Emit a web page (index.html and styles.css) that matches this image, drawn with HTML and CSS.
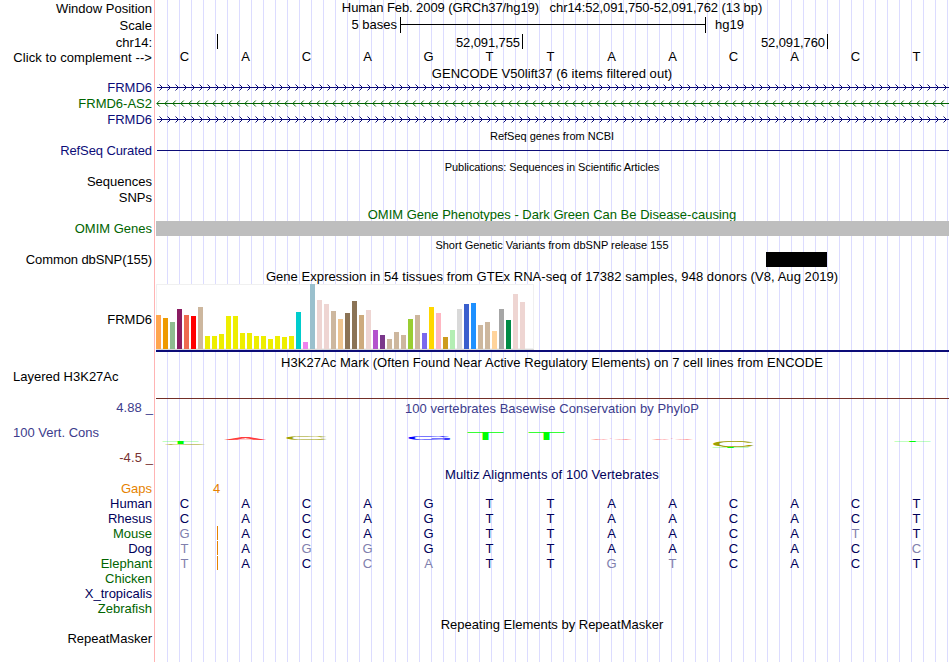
FILE: index.html
```html
<!DOCTYPE html>
<html lang="en">
<head>
    <meta charset="UTF-8">
    <meta name="viewport" content="width=device-width, initial-scale=1.0">
    <title>chr14:52,091,750-52,091,762 hg19</title>
    <link rel="stylesheet" href="styles.css">
</head>
<body>

    <div class="browser">
        <div class="labels">
            <div class="label h17">Window Position</div>
            <div class="label h17">Scale</div>
            <div class="label h15">chr14:</div>
            <div class="label h30 wide">Click to complement --&gt;</div>
            <div class="label h16 navy">FRMD6</div>
            <div class="label h16 green">FRMD6-AS2</div>
            <div class="label h31 navy">FRMD6</div>
            <div class="label h31 navy tight">RefSeq Curated</div>
            <div class="label h16">Sequences</div>
            <div class="label h31">SNPs</div>
            <div class="label h31 green">OMIM Genes</div>
            <div class="label h60 tight">Common dbSNP(155)</div>
            <div class="label h57">FRMD6</div>
            <div class="label h31 left">Layered H3K27Ac</div>
            <div class="label h25 cons limit">4.88 _</div>
            <div class="label h25 cons left">100 Vert. Cons</div>
            <div class="label h31 cons-min limit">-4.5 _</div>
            <div class="label h15 orange">Gaps</div>
            <div class="label h15 dark">Human</div>
            <div class="label h15 dark">Rhesus</div>
            <div class="label h15 green">Mouse</div>
            <div class="label h15 dark">Dog</div>
            <div class="label h15 green">Elephant</div>
            <div class="label h15 green">Chicken</div>
            <div class="label h15 dark">X_tropicalis</div>
            <div class="label h30 green">Zebrafish</div>
            <div class="label h15">RepeatMasker</div>
        </div>

        <div class="tracks">
            <div class="title position">Human Feb. 2009 (GRCh37/hg19) &nbsp; chr14:52,091,750-52,091,762 (13 bp)</div>
            <div class="scale">
                <span class="scale-size">5 bases</span>
                <span class="scale-bar"><span></span></span>
                <span class="scale-db">hg19</span>
            </div>
            <div class="ticks">
                <span class="tick first"></span>
                <span class="tick">52,091,755</span>
                <span class="tick">52,091,760</span>
            </div>
            <div class="bases ruler" data-seq="CACAGTTAACACT"></div>

            <div class="title gencode">GENCODE V50lift37 (6 items filtered out)</div>
            <svg class="gene" width="794" height="16">
                <defs>
                    <pattern id="right" x="2" width="8" height="16" patternUnits="userSpaceOnUse">
                        <path d="M2.5 3.5 L5.5 6.5 L2.5 9.5" fill="none" stroke="#0c0c78"/>
                    </pattern>
                    <pattern id="leftward" x="1" width="8" height="16" patternUnits="userSpaceOnUse">
                        <path d="M3.8 3.5 L0.8 6.5 L3.8 9.5" fill="none" stroke="#006400"/>
                    </pattern>
                </defs>
                <rect x="2" y="6" width="792" height="1" fill="#0c0c78"/>
                <rect x="2" width="792" height="16" fill="url(#right)"/>
            </svg>
            <svg class="gene" width="794" height="16">
                <rect x="2" y="6" width="792" height="1" fill="#006400"/>
                <rect x="1" width="793" height="16" fill="url(#leftward)"/>
            </svg>
            <svg class="gene" width="794" height="16">
                <rect x="2" y="6" width="792" height="1" fill="#0c0c78"/>
                <rect x="2" width="792" height="16" fill="url(#right)"/>
            </svg>

            <div class="title small refseq">RefSeq genes from NCBI</div>
            <div class="refseq-line"></div>

            <div class="title small pubs">Publications: Sequences in Scientific Articles</div>

            <div class="title omim green">OMIM Gene Phenotypes - Dark Green Can Be Disease-causing</div>
            <div class="omim-bar"></div>

            <div class="title small dbsnp">Short Genetic Variants from dbSNP release 155</div>
            <div class="snp"></div>

            <div class="title gtex-title">Gene Expression in 54 tissues from GTEx RNA-seq of 17382 samples, 948 donors (V8, Aug 2019)</div>
            <div class="gtex" id="gtex"></div>
            <div class="gtex-line"></div>

            <div class="title h3k27ac">H3K27Ac Mark (Often Found Near Active Regulatory Elements) on 7 cell lines from ENCODE</div>
            <div class="h3k27ac-line"></div>

            <div class="title phylop cons">100 vertebrates Basewise Conservation by PhyloP</div>
            <svg class="logo" width="794" height="51" id="logo"></svg>

            <div class="title multiz dark">Multiz Alignments of 100 Vertebrates</div>
            <div class="gaps orange"><span>4</span></div>
            <div class="bases dark" data-seq="CACAGTTAACACT"></div>
            <div class="bases dark" data-seq="CACAGTTAACACT"></div>
            <div class="bases dark insert" data-seq="gACAGTTAACAtT"></div>
            <div class="bases dark insert" data-seq="tAggGTTAACACc"></div>
            <div class="bases dark insert" data-seq="tACcaTTgtCACT"></div>

            <div class="title repeats">Repeating Elements by RepeatMasker</div>
        </div>
    </div>

    <script>
        // lower case letters differ from the human base
        document.querySelectorAll('.bases').forEach(row => {
            for (const base of row.dataset.seq) {
                const cell = document.createElement('span');
                cell.textContent = base.toUpperCase();
                if (base !== base.toUpperCase()) cell.className = 'mismatch';
                row.appendChild(cell);
            }
        });

        // GTEx bars: color, height
        const tissues = [
            ['#ffa54f', 34], ['#ee9a00', 31], ['#8fbc8f', 27], ['#8b1c62', 40], ['#ee6a50', 34], ['#ff0000', 33],
            ['#cdb79e', 42], ['#eeee00', 13], ['#eeee00', 13], ['#eeee00', 15], ['#eeee00', 33], ['#eeee00', 33],
            ['#eeee00', 16], ['#eeee00', 16], ['#eeee00', 13], ['#eeee00', 13], ['#eeee00', 10], ['#eeee00', 13],
            ['#eeee00', 12], ['#eeee00', 13], ['#00cdcd', 37], ['#ee82ee', 7], ['#9ac0cd', 65], ['#eed5d2', 49],
            ['#eed5d2', 45], ['#cdb79e', 38], ['#eec591', 30], ['#8b7355', 36], ['#8b7355', 48], ['#cdaa7d', 34],
            ['#eed5d2', 39], ['#b452cd', 19], ['#7a378b', 14], ['#cdb79e', 10], ['#cdb79e', 17], ['#cdb79e', 14],
            ['#9acd32', 30], ['#cdb79e', 34], ['#7b68ee', 16], ['#ffd700', 42], ['#ffb6c1', 36], ['#cd9b1d', 12],
            ['#b4eeb4', 19], ['#d9d9d9', 40], ['#3a5fcd', 45], ['#1e90ff', 46], ['#cdb79e', 24], ['#cdb79e', 27],
            ['#ffd39b', 18], ['#a6a6a6', 40], ['#008b45', 29], ['#eed5d2', 55], ['#eed5d2', 47], ['#ff00ff', 0]
        ];
        document.getElementById('gtex').innerHTML = tissues.map(([color, height]) =>
            `<span style="height:${height}px;background:${color}"></span>`).join('');

        // conservation logo: letter, left, baseline, vertical stretch, color
        const logo = [
            ['T', 6, 28, 0.065, '#00ff00'], ['C', 7, 29, 0.02, '#a0a000'],
            ['A', 69, 24, 0.04, '#ff3c3c'], ['C', 128, 24, 0.085, '#a0a000'],
            ['G', 250, 24, 0.085, '#0000ff'],
            ['T', 311, 24, 0.18, '#00ff00'], ['T', 372, 24, 0.18, '#00ff00'],
            ['A', 435, 24, 0.022, '#ff0000'], ['A', 496, 24, 0.022, '#ff0000'],
            ['C', 555, 31, 0.13, '#a0a000'], ['T', 556, 32, 0.02, '#00ff00'],
            ['T', 738, 26, 0.022, '#00ff00']
        ];
        document.getElementById('logo').innerHTML = logo.map(([base, x, y, stretch, color]) =>
            `<text transform="translate(${x} ${y}) scale(1 ${stretch})" fill="${color}">${base}</text>`).join('');
    </script>

</body>
</html>
```
FILE: styles.css
```css
* {
    margin: 0;
    padding: 0;
    box-sizing: border-box;
}

body {
    background: #fff;
    color: #000;
    font-family: "Liberation Sans", Arial, Helvetica, sans-serif;
    font-size: 13px;
    line-height: 15px;
    overflow: hidden;
}

.browser {
    display: flex;
    width: 949px;
    height: 662px;
}

/* left column */
.labels {
    width: 154px;
    padding: 1px 2px 0 13px;
}

.label {
    text-align: right;
    white-space: nowrap;
}

.label.left {
    text-align: left;
}

.label.limit {
    margin-right: -1px;
    letter-spacing: 0.1px;
}

.label.wide {
    letter-spacing: 0.08px;
}

.label.tight {
    letter-spacing: -0.1px;
}

.h15 { height: 15px; }
.h16 { height: 16px; }
.h17 { height: 17px; }
.h25 { height: 25px; }
.h30 { height: 30px; }
.h31 { height: 31px; }
.h57 { height: 57px; }
.h60 { height: 60px; }

.navy { color: #0c0c78; }
.dark { color: #00005a; }
.green { color: #006400; }
.orange { color: #e68200; }
.cons { color: #3c3c8c; }
.cons-min { color: #783232; }

/* right column */
.tracks {
    width: 795px;
    border-left: 1px solid #ffb4b4;
    background-image: repeating-linear-gradient(to right, #dcdcff 0, #dcdcff 1px, transparent 1px, transparent 12px);
    background-position: 12px 0;
    background-repeat: no-repeat;
}

.title {
    height: 15px;
    text-align: center;
    white-space: nowrap;
}

.title.small {
    height: 12px;
    font-size: 11px;
    line-height: 12px;
}

.position {
    letter-spacing: -0.08px;
}

.scale {
    display: flex;
    height: 16px;
    margin-top: 2px;
}

.scale-size {
    width: 245px;
    padding-right: 3px;
    text-align: right;
}

.scale-bar {
    width: 306px;
    padding-top: 7px;
    border-left: 1px solid #000;
    border-right: 1px solid #000;
}

.scale-bar span {
    display: block;
    height: 1px;
    background: #000;
}

.scale-db {
    padding-left: 9px;
}

.ticks {
    display: flex;
    height: 15px;
    margin-top: 1px;
}

.tick {
    width: 305px;
    padding: 1px 2px 0 0;
    border-right: 1px solid #000;
    text-align: right;
    letter-spacing: -0.1px;
}

.tick.first {
    width: 63px;
}

.bases {
    display: grid;
    grid-template-columns: repeat(13, 61px);
    height: 15px;
    margin-left: -1px;
    text-align: center;
}

.mismatch {
    color: #8080ad;
}

.gencode {
    margin-top: 2px;
    letter-spacing: 0.05px;
}

.gene {
    display: block;
}

.refseq {
    margin-top: 1px;
}

.refseq-line {
    height: 1px;
    margin: 8px 0 10px 2px;
    background: #0c0c78;
}

.pubs {
    letter-spacing: -0.07px;
}

.omim {
    height: 14px;
    margin-top: 34px;
    overflow: hidden;
}

.omim-bar {
    height: 15px;
    margin-left: 1px;
    background: #bebebe;
}

.dbsnp {
    margin-top: 3px;
}

.snp {
    width: 61px;
    height: 15px;
    margin: 1px 0 2px 611px;
    background: #000;
}

.gtex-title {
    letter-spacing: 0.055px;
}

.gtex {
    display: flex;
    align-items: flex-end;
    gap: 2px;
    width: 378px;
    height: 66px;
    margin-left: 1px;
    background: #fff;
    box-shadow: inset 0 0 0 1px #f0f0f0;
    border-bottom: 1px solid #d8d8d8;
}

.gtex span {
    width: 5px;
}

.gtex-line {
    height: 2px;
    margin-left: 1px;
    background: #0c0c78;
}

.h3k27ac {
    margin-top: 3px;
    letter-spacing: 0.05px;
}

.h3k27ac-line {
    height: 1px;
    margin: 28px 0 2px 1px;
    background: #732e26;
}

.phylop {
    letter-spacing: 0.04px;
}

.logo {
    display: block;
    font-size: 64px;
}

.multiz {
    height: 14px;
    letter-spacing: 0.08px;
}

.gaps {
    height: 15px;
}

.gaps span {
    display: block;
    width: 123px;
    text-align: center;
}

/* orange mark between the first two bases */
.insert {
    background: linear-gradient(#e68200, #e68200) 63px 0 / 1px 14px no-repeat;
}

.repeats {
    margin-top: 46px;
}
```
